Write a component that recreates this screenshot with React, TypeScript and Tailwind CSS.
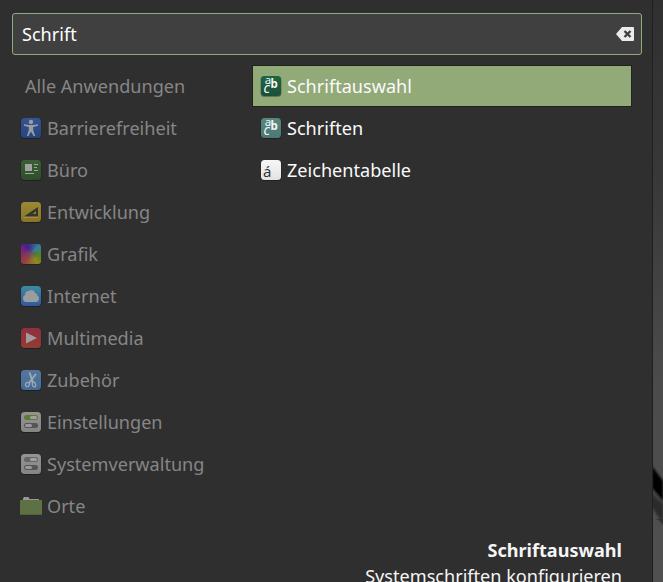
import type { ReactNode } from "react";

function Tile({ id, from, to, children }: { id: string; from: string; to: string; children?: ReactNode }) {
  return (
    <svg width="22" height="22" viewBox="0 0 22 22" className="shrink-0">
      <defs>
        <linearGradient id={id} x1="0" y1="0" x2="0" y2="1">
          <stop offset="0" stopColor={from} />
          <stop offset="1" stopColor={to} />
        </linearGradient>
      </defs>
      <rect x="0.5" y="1" width="21" height="21" rx="4" fill="#000" opacity="0.3" />
      <rect x="1" y="1" width="20" height="20" rx="3.5" fill={`url(#${id})`} />
      {children}
    </svg>
  );
}

function Toggles({ id, on }: { id: string; on: string }) {
  return (
    <Tile id={id} from="#949494" to="#858585">
      <rect x="4" y="4" width="14" height="5" rx="2.5" fill={on} />
      <rect x="10" y="5" width="7" height="3" rx="1.5" fill="#a0a0a0" />
      <rect x="4" y="12" width="14" height="5" rx="2.5" fill="#555" />
      <rect x="5" y="13" width="7" height="3" rx="1.5" fill="#999" />
    </Tile>
  );
}

function FontTile({ id, from, to }: { id: string; from: string; to: string }) {
  return (
    <Tile id={id} from={from} to={to}>
      <g fill="#f2f5f3" fontFamily="Noto Sans, sans-serif">
        <text x="4.8" y="9.3" fontSize="11.5">a</text>
        <text x="10.6" y="13.3" fontSize="11.5" fontWeight="700">b</text>
        <text x="3.6" y="17.6" fontSize="14" fontStyle="italic">c</text>
      </g>
    </Tile>
  );
}

const categories: { label: string; icon: ReactNode }[] = [
  {
    label: "Barrierefreiheit",
    icon: (
      <Tile id="access" from="#345492" to="#25447f">
        <circle cx="11" cy="5" r="2.2" fill="#9b9d9f" />
        <path d="M4 7.2 9 8h4l5-.8v1.5L13.2 10v3.5l2 5.5h-1.6L11 14.5 8.400 19H6.800l2-5.500V10L4 8.700z" fill="#9b9d9f" />
      </Tile>
    ),
  },
  {
    label: "Büro",
    icon: (
      <Tile id="office" from="#386032" to="#304d2c">
        <path d="M5 5h7v7H5zM14 5h4v1h-4zM14 8h3v1h-3zM14 11h4v1h-4zM5 14h9v1H5z" fill="#a0a39f" />
      </Tile>
    ),
  },
  {
    label: "Entwicklung",
    icon: (
      <Tile id="dev" from="#9a8933" to="#8a7425">
        <path d="M4 16h14" stroke="#b6a85d" />
        <path fillRule="evenodd" d="M4 15.500 18 6v9.500zM12.500 13H16v-3z" fill="#333332" />
      </Tile>
    ),
  },
  {
    label: "Grafik",
    icon: (
      <div className="flex h-[22px] w-[22px] shrink-0 justify-center pt-px">
        <div className="h-5 w-5 rounded-[3px] bg-[radial-gradient(circle,#6d5362_0%,transparent_45%),conic-gradient(from_0deg,#383a91,#35839a_45deg,#45833a_85deg,#66851f_115deg,#938823_145deg,#95692f_180deg,#943f3d_220deg,#8a3158_260deg,#6c237c_305deg,#42228d_335deg,#383a91)] shadow-[0_1px_0_#242424]" />
      </div>
    ),
  },
  {
    label: "Internet",
    icon: (
      <Tile id="internet" from="#3b8ca2" to="#31589c">
        <path d="M6 17a3.700 3.700 0 0 1-3-3.600A3.500 3.500 0 0 1 5 10c0-3 1.500-4.200 4-4 2-2 5.500-1 6 2 1.500 0 2 .8 2 2a3.500 3.500 0 0 1 2 3.300c0 2.300-1 3.700-3.200 3.700z" fill="#9b9c9d" />
      </Tile>
    ),
  },
  {
    label: "Multimedia",
    icon: (
      <Tile id="media" from="#922e42" to="#913d30">
        <path d="m6 5.500 11 5.500-11 5.500z" fill="#a29b9b" />
      </Tile>
    ),
  },
  {
    label: "Zubehör",
    icon: (
      <Tile id="tools" from="#55779f" to="#426c99">
        <g fill="none" stroke="#a4aaad">
          <path d="m9.500 3.500 3.300 9.500M16 5l-7 9" strokeWidth="1.800" />
          <ellipse cx="7.500" cy="15.500" rx="1.800" ry="2.200" transform="rotate(35 7.500 15.500)" strokeWidth="1.200" />
          <ellipse cx="14" cy="15.500" rx="1.600" ry="2.500" transform="rotate(-20 14 15.500)" strokeWidth="1.200" />
        </g>
      </Tile>
    ),
  },
  { label: "Einstellungen", icon: <Toggles id="settings" on="#597d35" /> },
  { label: "Systemverwaltung", icon: <Toggles id="system" on="#666666" /> },
  {
    label: "Orte",
    icon: (
      <svg width="22" height="22" viewBox="0 0 22 22" className="shrink-0">
        <path d="M3 5V3.500L4 2h4.500L9.500 4H19v3H3z" fill="#999" />
        <rect y="5" width="22" height="15" rx="1" fill="#5e7145" />
        <path d="M.5 19.500h21" stroke="#51623d" />
      </svg>
    ),
  },
];

const results: { label: string; icon: ReactNode }[] = [
  { label: "Schriftauswahl", icon: <FontTile id="fontpick" from="#1d6545" to="#1b5038" /> },
  { label: "Schriften", icon: <FontTile id="fonts" from="#588781" to="#4e7773" /> },
  {
    label: "Zeichentabelle",
    icon: (
      <Tile id="chars" from="#f6f6f6" to="#e3e3e3">
        <text x="3" y="17.500" fontSize="15" fontFamily="Noto Sans, sans-serif" fill="#353535">á</text>
      </Tile>
    ),
  },
];

export default function App() {
  return (
    <div className="flex h-[582px] w-[663px] overflow-hidden bg-[#2f2f2f] font-['Noto_Sans',sans-serif] text-[18.1px] leading-[26px]">
      <main className="flex w-[652px] shrink-0 flex-col">
        <div className="mt-[13px] ml-3 flex h-[42px] w-[630px] shrink-0 items-center justify-between rounded-[3px] border border-[#92a978] bg-[#404040] pr-[7px] pl-[9px] text-white">
          <span>Schrift</span>
          <svg width="18" height="14" viewBox="0 0 18 14">
            <path d="M6 0h11q1 0 1 1v12q0 1-1 1H6L0 7z" fill="#ececec" />
            <path d="m8.500 4 6 6m0-6-6 6" stroke="#404040" strokeWidth="2.400" />
          </svg>
        </div>
        <div className="mt-[10px] flex">
          <nav className="flex w-[252px] flex-col pl-5 text-[#868686]">
            <div className="flex h-[42px] items-center pl-[5px]">Alle Anwendungen</div>
            {categories.map((c) => (
              <div key={c.label} className="flex h-[42px] items-center gap-[5px] whitespace-nowrap">
                {c.icon}
                <span>{c.label}</span>
              </div>
            ))}
          </nav>
          <section className="flex w-[380px] flex-col text-[#fafafa]">
            {results.map((r, i) => (
              <div
                key={r.label}
                className={`flex h-[42px] items-center gap-[5px] border pl-[7px] ${i === 0 ? "border-[#20231d] bg-[#92a978]" : "border-transparent"}`}
              >
                {r.icon}
                <span>{r.label}</span>
              </div>
            ))}
          </section>
        </div>
        <footer className="mt-[10px] flex shrink-0 flex-col items-end pr-[30px] whitespace-nowrap text-[#f5f5f5]">
          <strong className="font-bold">Schriftauswahl</strong>
          <span>Systemschriften konfigurieren</span>
        </footer>
      </main>
      <svg width="11" height="582" viewBox="0 0 11 582" className="shrink-0">
        <defs>
          <linearGradient id="wall" x1="0" y1="0" x2="0" y2="1">
            <stop offset="0" stopColor="#303030" />
            <stop offset="0.3" stopColor="#383838" />
            <stop offset="0.65" stopColor="#4b4b4b" />
            <stop offset="1" stopColor="#505050" />
          </linearGradient>
          <filter id="soft" x="-1" y="-0.5" width="3" height="2">
            <feGaussianBlur stdDeviation="1" />
          </filter>
        </defs>
        <rect width="11" height="582" fill="url(#wall)" />
        <g filter="url(#soft)">
          <path d="m0 466 11 15v25L0 489z" fill="#060606" />
          <path d="m0 490 11 13" stroke="#444" strokeWidth="2" />
          <path d="m0 493 11 13v18L0 507z" fill="#292929" />
        </g>
        <path d="M3 519q6 1 8 6v-6z" fill="#303030" />
        <path d="M.5 0v582" stroke="#1f1f1f" />
      </svg>
    </div>
  );
}
